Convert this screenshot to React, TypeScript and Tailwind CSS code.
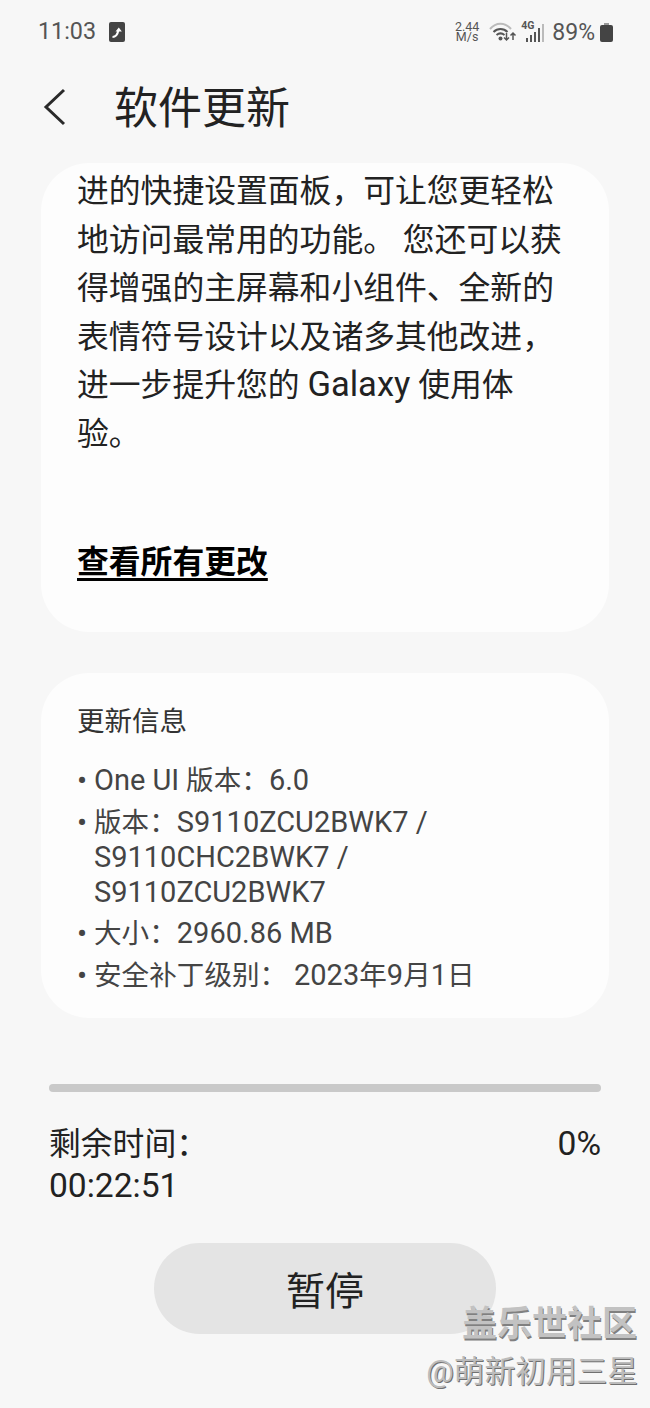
const FONT = "font-['Roboto','Noto_Sans_CJK_SC',sans-serif]";

function StatusBar() {
  return (
    <div className="flex items-center justify-between h-[64px] pl-[38px] pr-[37px] text-[#555]">
      <div className="flex items-center gap-[13px]">
        <span className="text-[23.300px] leading-none">11:03</span>
        <svg width="16" height="20" viewBox="0 0 16 20">
          <rect width="16" height="20" rx="2" fill="#444" />
          <path d="M3.500 15c3 0 5-2 6-7" stroke="#fff" strokeWidth="2" fill="none" />
          <path d="M6.500 9.500 9.800 5.500l3 4z" fill="#fff" />
        </svg>
      </div>
      <div className="flex items-center">
        <div className="text-center text-[12.500px] leading-[10px]">
          2.44<br />M/s
        </div>
        <svg className="ml-[10px]" width="28" height="20" viewBox="0 0 28 20" fill="none">
          <path d="M1 7c6-7 15-7 21 0" stroke="#bbb" strokeWidth="2" />
          <path d="M4.500 10c4-4 10-4 14 0M7.500 13c2.500-2 5.500-2 8 0" stroke="#555" strokeWidth="2" />
          <circle cx="11.500" cy="16.500" r="2" fill="#555" />
          <path d="M17.500 11v7m-2.500-2.500 2.500 2.500 2.500-2.500M24 18v-7m-2.500 2.500 2.500-2.500 2.500 2.500" stroke="#555" strokeWidth="1.500" />
        </svg>
        <div className="relative ml-[4px] w-[23px] h-[20px]">
          <span className="absolute left-0 top-[-1px] text-[10.500px] leading-none font-bold">4G</span>
          <svg className="absolute left-0 top-0" width="23" height="20" viewBox="0 0 23 20">
            <rect x="5" y="16" width="2" height="4" fill="#555" />
            <rect x="9" y="13" width="2" height="7" fill="#555" />
            <rect x="13" y="10" width="2" height="10" fill="#555" />
            <rect x="17" y="6" width="2" height="14" fill="#555" />
            <rect x="21" y="2" width="2" height="18" fill="#bbb" />
          </svg>
        </div>
        <span className="ml-[8px] text-[23px] leading-none">89%</span>
        <svg className="ml-[5px]" width="13" height="19" viewBox="0 0 13 19">
          <rect x="4" width="5" height="3" fill="#999" />
          <rect y="2" width="13" height="17" rx="2" fill="#444" />
        </svg>
      </div>
    </div>
  );
}

// the latin parts run a little wider than the CJK ones in this font
function L({ children }: { children: string }) {
  return <span className="text-[29px]">{children}</span>;
}

const infoRows = [
  { id: 'ui', gap: 'mt-0', lines: [<><L>One UI</L> 版本：<L>6.0</L></>] },
  { id: 'ver', gap: 'mt-[7px]', lines: [<>版本：<L>S9110ZCU2BWK7 /</L></>, <L>S9110CHC2BWK7 /</L>, <L>S9110ZCU2BWK7</L>] },
  { id: 'size', gap: 'mt-[6px]', lines: [<>大小：<L>2960.86 MB</L></>] },
  { id: 'patch', gap: 'mt-[7px]', lines: [<>安全补丁级别： <L>2023</L>年<L>9</L>月<L>1</L>日</>] },
];

export default function App() {
  return (
    <div className={`relative w-[650px] h-[1408px] overflow-hidden bg-[#f7f7f7] text-[#222] ${FONT}`}>
      <StatusBar />

      <div className="flex items-center h-[86px] pl-[40px]">
        <svg width="30" height="42" viewBox="0 0 30 42" fill="none">
          <path d="M24 4 6 21l18 17" stroke="#2a2a2a" strokeWidth="3" />
        </svg>
        <h1 className="ml-[44px] pt-[4px] text-[44px] leading-none font-normal">软件更新</h1>
      </div>

      <div className="mx-[41px] mt-[13px] h-[469px] rounded-[48px] bg-[#fdfdfd] pl-[36px] pr-[30px] pt-[4px]">
        <p className="text-[31.800px] leading-[48.500px]">
          进的快捷设置面板，可让您更轻松<br />
          地访问最常用的功能。 您还可以获<br />
          得增强的主屏幕和小组件、全新的<br />
          表情符号设计以及诸多其他改进，<br />
          进一步提升您的 <span className="text-[34.500px] leading-none">Galaxy</span> 使用体<br />
          验。
        </p>
        <div className="mt-[80px] text-[31.800px] leading-[48px] font-bold text-black underline underline-offset-[5px]">查看所有更改</div>
      </div>

      <div className="mx-[41px] mt-[41px] h-[345px] rounded-[48px] bg-[#fdfdfd] pl-[36px] pr-[30px] pt-[33px]">
        <h2 className="text-[27.500px] leading-[32px] font-normal text-[#333]">更新信息</h2>
        <ul className="mt-[25px] text-[27.600px] leading-[35px] text-[#444]">
          {infoRows.map(row => (
            <li key={row.id} className={`flex ${row.gap}`}>
              <span className="w-[17px] shrink-0 text-[30px]">•</span>
              <div>
                {row.lines.map((line, i) => <div key={i} className="h-[35px]">{line}</div>)}
              </div>
            </li>
          ))}
        </ul>
      </div>

      <div className="mx-[49px] mt-[66px] h-[8px] rounded-full bg-[#c9c9c9]" />

      <div className="flex justify-between mx-[49px] mt-[30px] text-[31.800px] leading-[44px]">
        <div>
          <div>剩余时间：</div>
          <div className="text-[33.600px] leading-[40px]">00:22:51</div>
        </div>
        <div className="text-[33.600px]">0%</div>
      </div>

      <div className="flex justify-center mt-[37px]">
        <button className="w-[342px] h-[91px] pt-[8px] rounded-full bg-[#e4e4e4] text-[39px] text-[#222]">暂停</button>
      </div>

      <div className="absolute right-[13px] top-[1303px] text-[35px] leading-[44px] font-bold text-[#c2c2c2] [text-shadow:1px_2px_0_#808080]">盖乐世社区</div>
      <div className="absolute right-[12px] top-[1352px] text-[30.700px] leading-[40px] text-[#bcbcbc] [text-shadow:1px_1px_0_#707070]">@萌新初用三星</div>
    </div>
  );
}
